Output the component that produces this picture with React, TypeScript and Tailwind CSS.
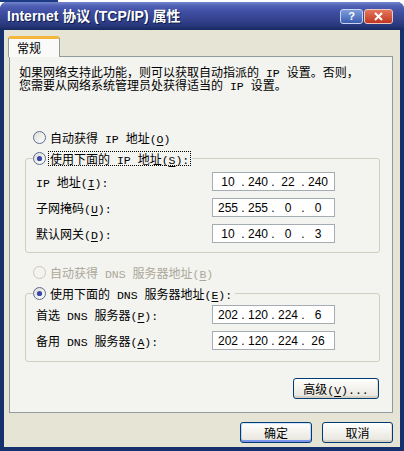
import React from 'react'

// 每段都是 13px 高的 inline-block，顶部对齐，这样中英混排不会把行撑高
const cjk = 'inline-block align-top h-[13px] leading-[13px] whitespace-pre'
const mono = "inline-block align-top h-[13px] leading-[17.3px] font-['Liberation_Mono',monospace] text-[11.5px] whitespace-pre"

// 把字符串拆成中文 / ASCII 段，ASCII 用等宽字体，&X 表示带下划线的快捷键
function T({ s }: { s: string }) {
  const out: React.ReactNode[] = []
  let i = 0
  while (i < s.length) {
    const c = s[i]
    if (c === '&') {
      out.push(<span key={i} className={mono + ' underline underline-offset-2'}>{s[i + 1]}</span>)
      i += 2
      continue
    }
    let j = i
    if (c.charCodeAt(0) < 128) {
      while (j < s.length && s.charCodeAt(j) < 128 && s[j] !== '&') j++
      out.push(<span key={i} className={mono}>{s.slice(i, j)}</span>)
    } else {
      while (j < s.length && s.charCodeAt(j) >= 128) j++
      out.push(<span key={i} className={cjk}>{s.slice(i, j)}</span>)
    }
    i = j
  }
  return <>{out}</>
}

function RadioDot({ checked, disabled }: { checked?: boolean; disabled?: boolean }) {
  const id = disabled ? 'rg-d' : 'rg-n'
  return (
    <svg width="13" height="13" viewBox="0 0 13 13" className="shrink-0">
      <defs>
        <linearGradient id={id} x1="0" y1="0" x2="1" y2="1">
          <stop offset="0" stopColor={disabled ? '#F4F3EE' : '#DCDBD5'} />
          <stop offset="1" stopColor={disabled ? '#F4F3EE' : '#FFFFFF'} />
        </linearGradient>
      </defs>
      <circle cx="6.5" cy="6.5" r="6" fill={`url(#${id})`} stroke={disabled ? '#CAC8BB' : '#5B6E8E'} />
      {checked && <circle cx="6.5" cy="6.5" r="2.6" fill="#3A47A8" />}
    </svg>
  )
}

function Radio({ label, checked, disabled, focus }: { label: string; checked?: boolean; disabled?: boolean; focus?: boolean }) {
  return (
    <span className={'flex items-center gap-[3px] h-[14px] ' + (disabled ? 'text-[#ACA899]' : 'text-black')}>
      <RadioDot checked={checked} disabled={disabled} />
      <span className={'px-[1px] h-[13px] ' + (focus ? 'outline-1 outline-dotted outline-black' : '')}>
        <T s={label} />
      </span>
    </span>
  )
}

function IpField({ parts }: { parts: string[] }) {
  return (
    <div className="w-[123px] h-[19px] border border-[#A5ACB2] bg-white flex items-center pl-[3px] font-['Liberation_Sans',sans-serif] text-[12px] leading-none">
      {parts.map((p, i) => (
        <React.Fragment key={i}>
          {i > 0 && <span className="w-[6px] text-center">.</span>}
          <span className="w-[24px] text-center">{p}</span>
        </React.Fragment>
      ))}
    </div>
  )
}

function Group({ legend, rows, pt, pb }: { legend: React.ReactNode; rows: { label: string; ip: string[] }[]; pt: string; pb: string }) {
  return (
    <fieldset className="ml-[15px] mr-[12px] border border-[#D0D0BF] rounded-[3px]">
      <legend className="ml-[7px] pr-[2px] h-[14px]">{legend}</legend>
      <div className={'grid grid-cols-[176px_123px] gap-y-[7px] pl-[10px] ' + pt + ' ' + pb}>
        {rows.map((r) => (
          <React.Fragment key={r.label}>
            <div className="flex items-center"><T s={r.label} /></div>
            <IpField parts={r.ip} />
          </React.Fragment>
        ))}
      </div>
    </fieldset>
  )
}

function Btn({ label, w, primary }: { label: string; w: string; primary?: boolean }) {
  return (
    <div
      className={
        'h-[21px] rounded-[3px] border border-[#003C74] bg-linear-to-b from-white to-[#E6E4DB] flex items-center justify-center ' +
        w + ' ' +
        (primary
          ? 'shadow-[inset_0_1px_0_#CEE7FF,inset_0_-2px_0_#7C94EA,inset_1px_0_0_#BCD4F6,inset_-1px_0_0_#BCD4F6]'
          : 'shadow-[inset_0_-2px_0_#D6D0C5,inset_-1px_0_0_#E2DED6]')
      }
    >
      <T s={label} />
    </div>
  )
}

export default function App() {
  return (
    <div className="w-[404px] h-[451px] flex flex-col overflow-hidden bg-white font-['Noto_Sans_CJK_SC',sans-serif] text-[12px] leading-[13px] text-black">
      <div className="h-[2px] flex">
        <div className="w-[58px] bg-[#1d3b84]" />
        <div className="flex-1 bg-white" />
      </div>
      <div className="flex-1 flex flex-col rounded-t-[7px] bg-[#16306e] overflow-hidden">
        {/* 标题栏 */}
        <div className="h-[28px] flex items-center pl-[7px] pr-[11px] bg-[linear-gradient(to_bottom,#7586cc_0%,#4e5fb4_14%,#3e4da1_38%,#35438f_62%,#28377b_84%,#16295f_100%)]">
          <span className="flex-1 font-['Liberation_Sans','Noto_Sans_CJK_SC',sans-serif] font-bold text-[14px] leading-[16px] text-white [text-shadow:1px_1px_0_#0c1c48]">
            Internet 协议 (TCP/IP) 属性
          </span>
          <div className="flex gap-[1px]">
            <div className="w-[23px] h-[15px] rounded-[3px] border border-[#c9d4ee] bg-linear-to-b from-[#7f9ddc] to-[#3c5db0] flex items-center justify-center text-white font-bold font-['Liberation_Sans',sans-serif] text-[11px] leading-none">
              ?
            </div>
            <div className="w-[29px] h-[15px] rounded-[3px] border border-[#efc9c0] bg-linear-to-b from-[#e4765c] to-[#bf3620] flex items-center justify-center">
              <svg width="9" height="9" viewBox="0 0 9 9">
                <path d="M1 1 L8 8 M8 1 L1 8" stroke="white" strokeWidth="2" />
              </svg>
            </div>
          </div>
        </div>

        {/* 客户区 */}
        <div className="flex-1 flex flex-col bg-[#E6E5D5] mx-[4px] mb-[4px] pl-[5px] pr-[7px] pt-[6px]">
          <div className="flex">
            <div className="relative z-10 -ml-px -mb-px w-[52px] h-[21px] border-x border-[#919B9C] border-t-[3px] border-t-[#F5B63E] rounded-t-[3px] bg-[#FAFAF8] pl-[8px] pt-[2px]">
              常规
            </div>
          </div>
          <div className="h-[357px] border border-[#919B9C] bg-[#F3F3EF] flex flex-col">
            <div className="mx-[9px] mt-[8px] flex flex-col">
              <div className="h-[13px]"><T s="如果网络支持此功能，则可以获取自动指派的 IP 设置。否则，" /></div>
              <div className="h-[13px]"><T s="您需要从网络系统管理员处获得适当的 IP 设置。" /></div>
            </div>
            <div className="ml-[23px] mt-[39px]">
              <Radio label="自动获得 IP 地址(&O)" />
            </div>
            <div className="mt-[7px]">
              <Group
                legend={<Radio label="使用下面的 IP 地址(&S):" checked focus />}
                pt="pt-[7px]"
                pb="pb-[9px]"
                rows={[
                  { label: 'IP 地址(&I):', ip: ['10', '240', '22', '240'] },
                  { label: '子网掩码(&U):', ip: ['255', '255', '0', '0'] },
                  { label: '默认网关(&D):', ip: ['10', '240', '0', '3'] },
                ]}
              />
            </div>
            <div className="ml-[23px] mt-[12px]">
              <Radio label="自动获得 DNS 服务器地址(&B)" disabled />
            </div>
            <div className="mt-[7px]">
              <Group
                legend={<Radio label="使用下面的 DNS 服务器地址(&E):" checked />}
                pt="pt-[5px]"
                pb="pb-[11px]"
                rows={[
                  { label: '首选 DNS 服务器(&P):', ip: ['202', '120', '224', '6'] },
                  { label: '备用 DNS 服务器(&A):', ip: ['202', '120', '224', '26'] },
                ]}
              />
            </div>
            <div className="flex justify-end mr-[13px] mt-[16px]">
              <Btn label="高级(&V)..." w="w-[86px]" />
            </div>
          </div>
          <div className="flex justify-end gap-[10px] mt-[9px]">
            <Btn label="确定" w="w-[72px]" primary />
            <Btn label="取消" w="w-[71px]" />
          </div>
        </div>
      </div>
    </div>
  )
}
